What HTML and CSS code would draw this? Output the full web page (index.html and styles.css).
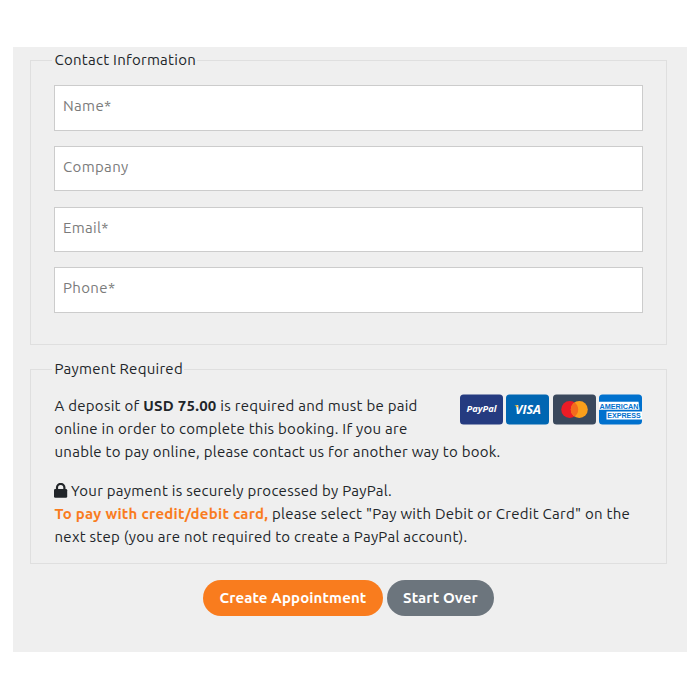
FILE: index.html
```
<!DOCTYPE html>
<html lang="en">
<head>
    <meta charset="UTF-8">
    <meta name="viewport" content="width=device-width, initial-scale=1.0">
    <title>Book an Appointment</title>
    <link rel="stylesheet" href="styles.css">
</head>
<body>
    <form class="booking">
        <fieldset class="contact">
            <legend>Contact Information</legend>
            <input type="text" placeholder="Name*">
            <input type="text" placeholder="Company">
            <input type="text" placeholder="Email*">
            <input type="text" placeholder="Phone*">
        </fieldset>

        <fieldset class="payment">
            <legend>Payment Required</legend>
            <div class="cards">
                <svg width="43" height="31" viewBox="0 0 43 31">
                    <rect y="0.5" width="43" height="30" rx="3.5" fill="#253b80"/>
                    <text class="paypal" x="6.5" y="18" textLength="30" lengthAdjust="spacingAndGlyphs">PayPal</text>
                </svg>
                <svg width="43" height="31" viewBox="0 0 43 31">
                    <rect y="0.5" width="43" height="30" rx="3.5" fill="#0066b2"/>
                    <text class="visa" x="9" y="20" textLength="26" lengthAdjust="spacingAndGlyphs">VISA</text>
                    <path d="M8.5 11.3h3l1 2.7z" fill="#f2ae14"/>
                </svg>
                <svg width="43" height="31" viewBox="0 0 43 31">
                    <rect y="0.5" width="43" height="30" rx="3.5" fill="#3a485c"/>
                    <circle cx="16.7" cy="15.5" r="8.5" fill="#eb1c26"/>
                    <circle cx="26.3" cy="15.5" r="8.5" fill="#f99f1b"/>
                    <path d="M21.5 8.5a8.5 8.5 0 0 1 0 14a8.5 8.5 0 0 1 0-14z" fill="#f26b1d"/>
                </svg>
                <svg width="43" height="31" viewBox="0 0 43 31">
                    <rect y="0.5" width="43" height="30" rx="3.5" fill="#0071ce"/>
                    <path d="M0 7.8h39.5l1 8H0zM7.5 17.6H43v8H7.5z" fill="#fff"/>
                    <text class="amex" x="0.5" y="14.6" textLength="39" lengthAdjust="spacingAndGlyphs">AMERICAN</text>
                    <text class="amex" x="8.3" y="24.4" textLength="33.5" lengthAdjust="spacingAndGlyphs">EXPRESS</text>
                </svg>
            </div>
            <p>
                A deposit of <strong>USD 75.00</strong> is required and must be paid<br>
                online in order to complete this booking. If you are<br>
                unable to pay online, please contact us for another way to book.
            </p>
            <p>
                <svg class="lock" width="14" height="15" viewBox="0 0 14 15"><path d="M3 7V4.6a3.7 3.7 0 0 1 7.4 0V7" fill="none" stroke="#212529" stroke-width="2.2"/><rect y="6" width="13.2" height="8.8" rx="1.3" fill="#212529"/></svg>Your payment is securely processed by PayPal.<br>
                <strong class="highlight">To pay with credit/debit card,</strong> please select "Pay with Debit or Credit Card" on the<br>
                next step (you are not required to create a PayPal account).
            </p>
        </fieldset>

        <div class="buttons">
            <button type="button" class="btn create">Create Appointment</button>
            <button type="button" class="btn reset">Start Over</button>
        </div>
    </form>
</body>
</html>
```
FILE: styles.css
```
* {
    box-sizing: border-box;
}

body {
    margin: 0;
    padding: 47px 13px 0;
    background: #fff;
    color: #212529;
    font-family: Ubuntu, "Noto Sans", sans-serif;
    font-size: 15px;
    line-height: 23px;
    letter-spacing: 0.265px;
}

.booking {
    height: 605px;
    padding: 1px 20px 0 17px;
    background: #efefef;
}

fieldset {
    margin: 0;
    padding: 0 23px;
    border: 1px solid #dfdfdf;
}

legend {
    height: 24px;
    margin: 0 0 13px -2px;
    padding: 0 1px 0 2.5px;
}

.contact {
    height: 297px;
}

.contact input {
    display: block;
    width: 100%;
    height: 45.6px;
    margin: 0 0 15.2px;
    padding: 0 8px 4.4px;
    border: 1px solid #ccc;
    background: #fff;
    font-family: inherit;
    font-size: 15px;
    letter-spacing: 0.35px;
}

.contact input::placeholder {
    color: #7b7b7b;
    opacity: 1;
}

.payment {
    height: 207px;
    margin-top: 12px;
}

.payment p {
    margin: 0 0 16px;
    padding-left: 0.5px;
    white-space: nowrap;
}

.cards {
    display: flex;
    gap: 3.4px;
    float: right;
    margin-right: 0.8px;
    letter-spacing: 0;
}

.cards svg {
    display: block;
    flex: none;
}

.paypal {
    fill: #fff;
    font: italic bold 9px "Open Sans", sans-serif;
}

.visa {
    fill: #fff;
    font: italic bold 12px "Open Sans", sans-serif;
}

.amex {
    fill: #0071ce;
    font: bold 7.8px/1 "Liberation Sans", sans-serif;
}

.lock {
    margin-right: 3px;
    margin-left: -0.5px;
    vertical-align: -2px;
}

.highlight {
    color: #f97c1e;
}

.buttons {
    display: flex;
    justify-content: center;
    gap: 4px;
    margin-top: 16px;
}

.btn {
    height: 36px;
    padding: 0 0 2px;
    border: none;
    border-radius: 18px;
    color: #fff;
    font-family: inherit;
    font-size: 15px;
    font-weight: bold;
    letter-spacing: 0.12px;
    cursor: pointer;
}

.create {
    width: 180px;
    background: #f97c1e;
}

.reset {
    width: 107px;
    background: #6c757d;
}
```
